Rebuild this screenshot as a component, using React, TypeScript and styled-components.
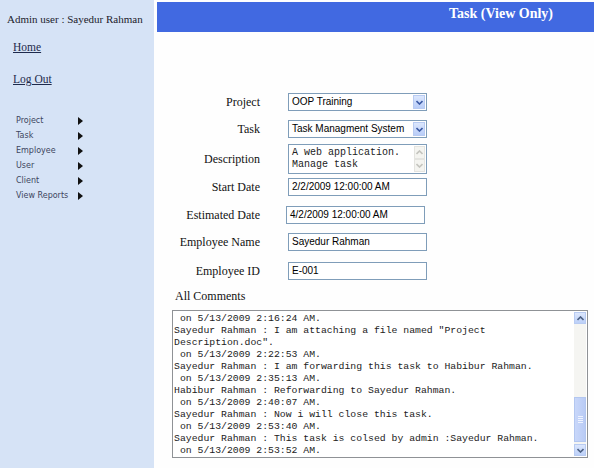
import React from 'react';
import styled, { createGlobalStyle } from 'styled-components';

const GlobalStyle = createGlobalStyle`
  html, body {
    margin: 0;
    padding: 0;
    background: #ffffff;
  }
  body {
    font-family: 'Liberation Serif', 'Times New Roman', serif;
  }
`;

const Page = styled.div`
  display: flex;
  width: 594px;
  height: 468px;
  overflow: hidden;
  background: #fefefe;
`;

const Sidebar = styled.div`
  width: 154px;
  flex-shrink: 0;
  background: #d6e3f6;
  display: flex;
  flex-direction: column;
`;

const AdminLine = styled.div`
  font-size: 11px;
  color: #1c1c2c;
  padding: 11px 0 0 7px;
  line-height: 16px;
  white-space: nowrap;
`;

const NavLink = styled.a`
  font-size: 11.5px;
  color: #1e2a4c;
  text-decoration: underline;
  margin: ${(p) => p.$mt}px 0 0 13px;
  line-height: 16px;
  width: fit-content;
  cursor: pointer;
`;

const Menu = styled.ul`
  list-style: none;
  margin: 26px 0 0 0;
  padding: 0 0 0 16px;
  display: flex;
  flex-direction: column;
`;

const MenuItem = styled.li`
  display: flex;
  align-items: center;
  height: 15px;
  font-family: 'DejaVu Sans', Verdana, sans-serif;
  font-size: 8px;
  color: #3d4660;
`;

const MenuText = styled.span`
  width: 62px;
`;

const Arrow = styled.span`
  width: 0;
  height: 0;
  border-top: 4px solid transparent;
  border-bottom: 4px solid transparent;
  border-left: 5px solid #111;
`;

const Main = styled.div`
  flex: 1;
  display: flex;
  flex-direction: column;
  padding: 2px 0 0 3px;
`;

const Header = styled.div`
  height: 30px;
  background: #4169e1;
  color: #ffffff;
  font-weight: bold;
  font-size: 14px;
  text-align: right;
  padding: 4px 41px 0 0;
  box-sizing: border-box;
  line-height: 16px;
`;

const Form = styled.div`
  display: flex;
  flex-direction: column;
  padding-top: 61px;
`;

const Row = styled.div`
  display: grid;
  grid-template-columns: 103px 139px;
  column-gap: 28px;
  align-items: center;
  height: ${(p) => p.$h}px;
  margin-top: ${(p) => p.$mt}px;
`;

const Label = styled.div`
  text-align: right;
  font-size: 12px;
  color: #111;
  white-space: nowrap;
`;

const Field = styled.div`
  box-sizing: border-box;
  width: 139px;
  height: ${(p) => p.$h || 18}px;
  border: 1px solid #7f9db9;
  background: #fff;
  display: flex;
  align-items: stretch;
  margin-left: ${(p) => p.$ml || 0}px;
`;

const FieldText = styled.div`
  flex: 1;
  font-family: 'Liberation Sans', Arial, sans-serif;
  font-size: 10px;
  color: #000;
  padding-left: 3px;
  line-height: 16px;
  white-space: nowrap;
  overflow: hidden;
`;

const MonoText = styled.div`
  flex: 1;
  font-family: 'Liberation Mono', 'Courier New', monospace;
  font-size: ${(p) => p.$size}px;
  line-height: ${(p) => p.$lh}px;
  color: #222;
  padding: ${(p) => p.$pad};
  white-space: pre;
  overflow: hidden;
`;

const DropButton = styled.div`
  width: 12px;
  margin: 1px;
  border: 1px solid #b8cbf2;
  background: linear-gradient(#dce7fd, #b9cdf8);
  display: flex;
  align-items: center;
  justify-content: center;
  box-sizing: border-box;
`;

const ScrollBar = styled.div`
  width: ${(p) => p.$w}px;
  display: flex;
  flex-direction: column;
  background: #f5f5f2;
  margin: 1px 1px 1px 0;
`;

const ScrollBtn = styled.div`
  height: ${(p) => p.$h}px;
  display: flex;
  align-items: center;
  justify-content: center;
  border: 1px solid ${(p) => (p.$disabled ? '#e4e4e0' : '#b8cbf2')};
  background: ${(p) => (p.$disabled ? '#f4f4f0' : 'linear-gradient(#dce7fd, #bcd0f8)')};
  box-sizing: border-box;
`;

const Track = styled.div`
  flex: 1;
  display: flex;
  flex-direction: column;
  justify-content: flex-end;
  padding-bottom: 2px;
`;

const Thumb = styled.div`
  height: 45px;
  border: 1px solid #b3c7f0;
  background: linear-gradient(90deg, #c8d7fa, #b9cbf5);
  box-sizing: border-box;
  display: flex;
  align-items: center;
  justify-content: center;
`;

const Grip = styled.div`
  width: 5px;
  height: 7px;
  background: repeating-linear-gradient(#eef3ff 0 1px, transparent 1px 2px);
`;

const CommentsLabel = styled.div`
  font-size: 12px;
  color: #111;
  margin: 9px 0 0 18px;
  line-height: 14px;
`;

const CommentsBox = styled.div`
  box-sizing: border-box;
  width: 416px;
  height: 148px;
  margin: 7px 0 0 15px;
  border: 1px solid #8f9296;
  background: #fff;
  display: flex;
`;

const Chevron = ({ up = false, color = '#4d6185' }) => (
  <svg width="7" height="5" viewBox="0 0 7 5">
    <path
      d={up ? 'M0.5 4 L3.5 1 L6.5 4' : 'M0.5 1 L3.5 4 L6.5 1'}
      fill="none"
      stroke={color}
      strokeWidth="1.6"
    />
  </svg>
);

const comments = [
  ' on 5/13/2009 2:16:24 AM.',
  'Sayedur Rahman : I am attaching a file named "Project',
  'Description.doc".',
  ' on 5/13/2009 2:22:53 AM.',
  'Sayedur Rahman : I am forwarding this task to Habibur Rahman.',
  ' on 5/13/2009 2:35:13 AM.',
  'Habibur Rahman : Reforwarding to Sayedur Rahman.',
  ' on 5/13/2009 2:40:07 AM.',
  'Sayedur Rahman : Now i will close this task.',
  ' on 5/13/2009 2:53:40 AM.',
  'Sayedur Rahman : This task is colsed by admin :Sayedur Rahman.',
  ' on 5/13/2009 2:53:52 AM.',
];

const menu = ['Project', 'Task', 'Employee', 'User', 'Client', 'View Reports'];

const Select = ({ value }) => (
  <Field>
    <FieldText>{value}</FieldText>
    <DropButton>
      <Chevron color="#3b5aa5" />
    </DropButton>
  </Field>
);

export default function App() {
  return (
    <>
      <GlobalStyle />
      <Page>
        <Sidebar>
          <AdminLine>Admin user : Sayedur Rahman</AdminLine>
          <NavLink $mt={12}>Home</NavLink>
          <NavLink $mt={16}>Log Out</NavLink>
          <Menu>
            {menu.map((m) => (
              <MenuItem key={m}>
                <MenuText>{m}</MenuText>
                <Arrow />
              </MenuItem>
            ))}
          </Menu>
        </Sidebar>
        <Main>
          <Header>Task (View Only)</Header>
          <Form>
            <Row $h={18} $mt={0}>
              <Label>Project</Label>
              <Select value="OOP Training" />
            </Row>
            <Row $h={18} $mt={9}>
              <Label>Task</Label>
              <Select value="Task Managment System" />
            </Row>
            <Row $h={30} $mt={6}>
              <Label>Description</Label>
              <Field $h={30}>
                <MonoText $size={10} $lh={12} $pad="2px 3px">
                  {'A web application.\nManage task'}
                </MonoText>
                <ScrollBar $w={11}>
                  <ScrollBtn $h={13} $disabled>
                    <Chevron up color="#c4c4be" />
                  </ScrollBtn>
                  <ScrollBtn $h={14} $disabled>
                    <Chevron color="#c4c4be" />
                  </ScrollBtn>
                </ScrollBar>
              </Field>
            </Row>
            <Row $h={18} $mt={4}>
              <Label>Start Date</Label>
              <Field>
                <FieldText>2/2/2009 12:00:00 AM</FieldText>
              </Field>
            </Row>
            <Row $h={18} $mt={10}>
              <Label>Estimated Date</Label>
              <Field $ml={-2}>
                <FieldText>4/2/2009 12:00:00 AM</FieldText>
              </Field>
            </Row>
            <Row $h={18} $mt={9}>
              <Label>Employee Name</Label>
              <Field>
                <FieldText>Sayedur Rahman</FieldText>
              </Field>
            </Row>
            <Row $h={18} $mt={11}>
              <Label>Employee ID</Label>
              <Field>
                <FieldText>E-001</FieldText>
              </Field>
            </Row>
          </Form>
          <CommentsLabel>All Comments</CommentsLabel>
          <CommentsBox>
            <MonoText $size={9.8} $lh={12} $pad="2px 1px">
              {comments.join('\n')}
            </MonoText>
            <ScrollBar $w={12}>
              <ScrollBtn $h={12}>
                <Chevron up />
              </ScrollBtn>
              <Track>
                <Thumb>
                  <Grip />
                </Thumb>
              </Track>
              <ScrollBtn $h={12}>
                <Chevron />
              </ScrollBtn>
            </ScrollBar>
          </CommentsBox>
        </Main>
      </Page>
    </>
  );
}
